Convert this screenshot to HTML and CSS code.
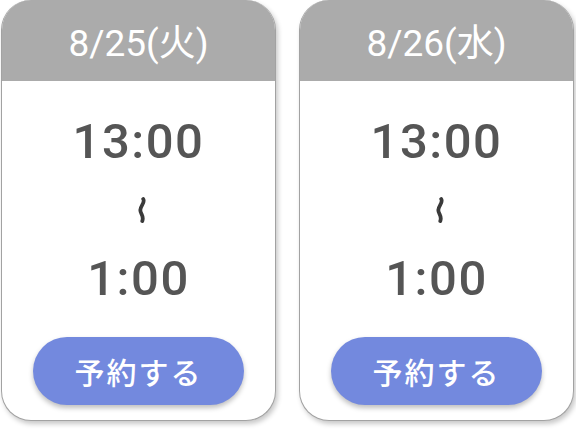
FILE: index.html
```html
<!DOCTYPE html>
<html lang="ja">
<head>
<meta charset="utf-8">
<link rel="stylesheet" href="styles.css">
</head>
<body>
<div class="row">
  <div class="card">
    <div class="card-head">8/25(火)</div>
    <div class="card-body">
      <div class="time">13:00</div>
      <svg class="wave" width="10" height="26" viewBox="0 0 10 26"><path d="M6.2 2 C8.5 5.5 3.3 9 3.3 13 C3.3 17 7.3 19 5.3 24" fill="none" stroke="#3a3a3a" stroke-width="3.8" stroke-linecap="round"/></svg>
      <div class="time time-end">1:00</div>
      <button class="reserve">予約する</button>
    </div>
  </div>
  <div class="card">
    <div class="card-head">8/26(水)</div>
    <div class="card-body">
      <div class="time">13:00</div>
      <svg class="wave" width="10" height="26" viewBox="0 0 10 26"><path d="M6.2 2 C8.5 5.5 3.3 9 3.3 13 C3.3 17 7.3 19 5.3 24" fill="none" stroke="#3a3a3a" stroke-width="3.8" stroke-linecap="round"/></svg>
      <div class="time time-end">1:00</div>
      <button class="reserve">予約する</button>
    </div>
  </div>
</div>
</body>
</html>
```

FILE: styles.css
```css
html, body {
  margin: 0;
  padding: 0;
  background: #ffffff;
}
body {
  width: 576px;
  height: 429px;
  overflow: hidden;
  font-family: Roboto, "Noto Sans CJK JP", sans-serif;
}
.row {
  display: flex;
  gap: 23px;
  padding-left: 1px;
}
.card {
  width: 275px;
  height: 421px;
  box-sizing: border-box;
  border: 1.5px solid #a2a2a2;
  border-top: none;
  border-radius: 30px;
  overflow: hidden;
  background: #ffffff;
  box-shadow: 2px 3px 5px rgba(0, 0, 0, 0.22);
  display: flex;
  flex-direction: column;
}
.card-head {
  height: 81px;
  background: #ababab;
  color: #ffffff;
  font-size: 37px;
  font-weight: 400;
  display: flex;
  align-items: center;
  justify-content: center;
  margin: 0 -1.5px;
  padding-bottom: 2px;
  box-sizing: border-box;
}
.card-body {
  flex: 1;
  display: flex;
  flex-direction: column;
  align-items: center;
}
.time {
  font-size: 49px;
  font-weight: 500;
  color: #555555;
  line-height: 1;
  letter-spacing: 1.5px;
  margin-top: 36px;
}
.wave {
  display: block;
  margin-top: 31px;
  margin-left: 6px;
}
.time-end {
  margin-top: 31px;
}
.reserve {
  margin-top: 34px;
  width: 211px;
  height: 68px;
  border: none;
  border-radius: 34px;
  background: #7389de;
  color: #ffffff;
  font-family: "Noto Sans CJK JP", sans-serif;
  font-size: 30px;
  font-weight: 500;
  letter-spacing: 2px;
  box-shadow: 0 3px 5px rgba(0, 0, 0, 0.25);
  padding: 0;
}
```
